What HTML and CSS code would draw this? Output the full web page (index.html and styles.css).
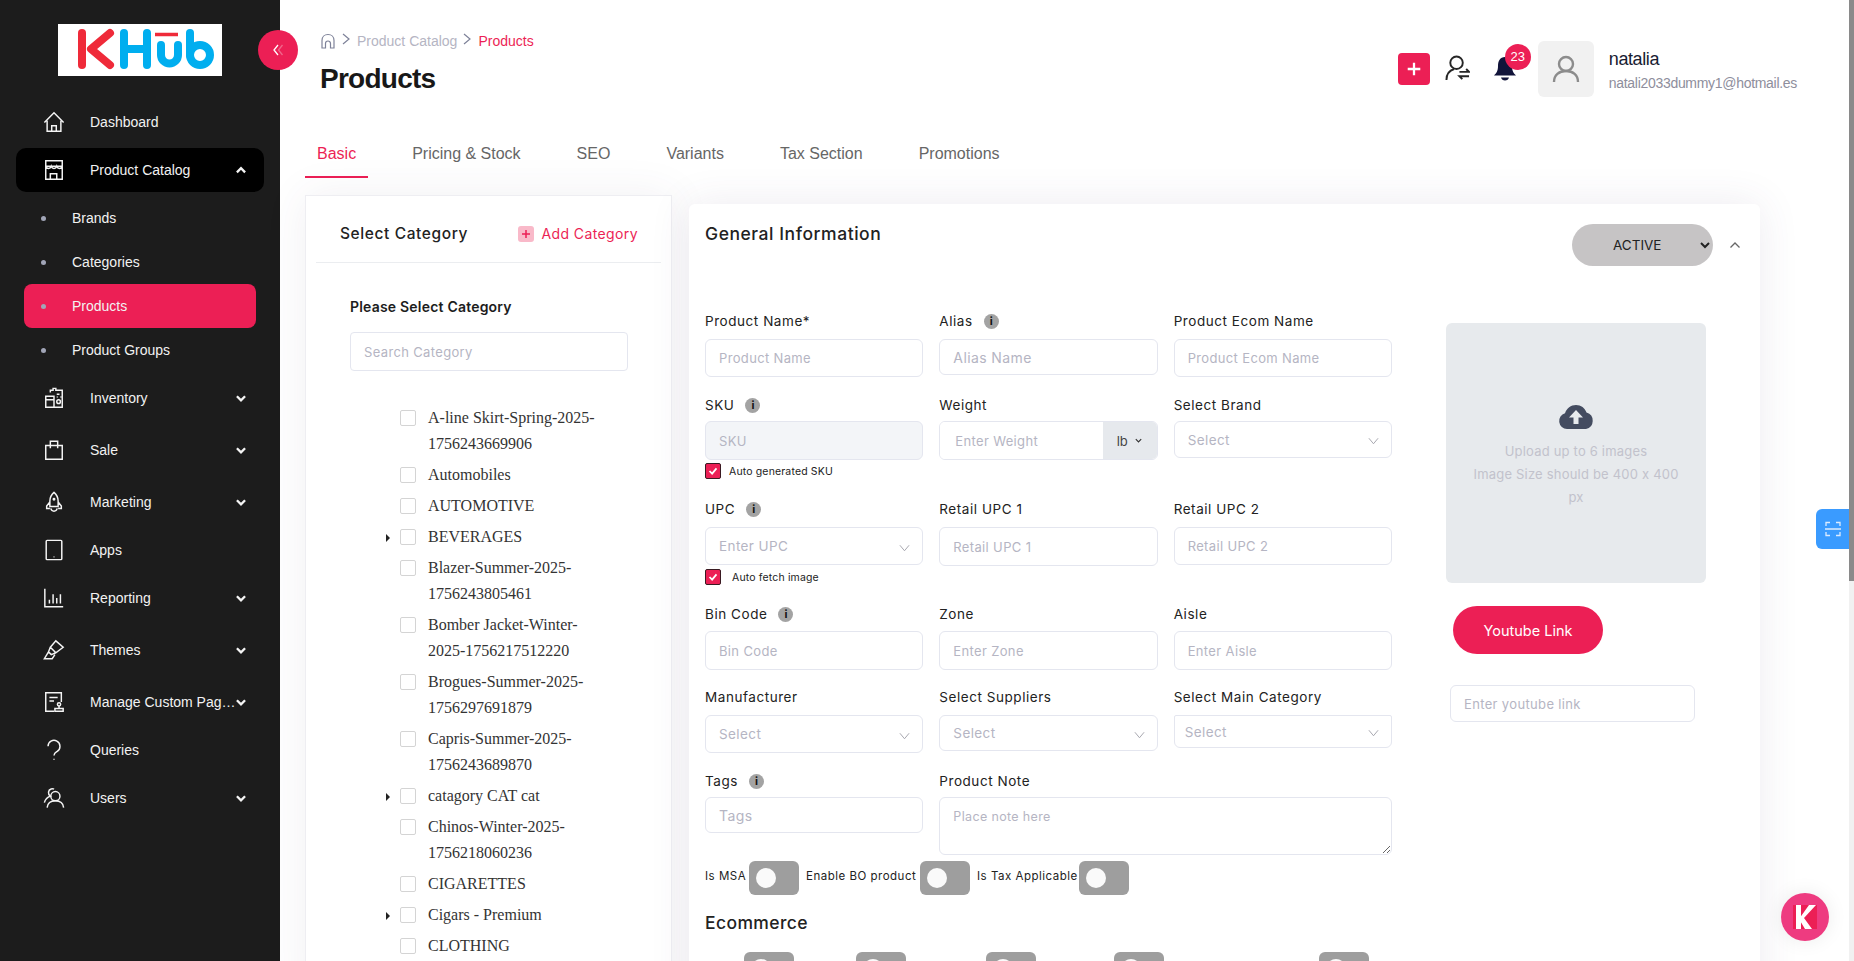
FILE: index.html
```html
<!DOCTYPE html>
<html lang="en">
<head>
<meta charset="utf-8">
<title>Products</title>
<link rel="stylesheet" href="styles.css">
</head>
<body>
<div class="app">
  <aside class="sidebar">
    <div class="logo">
      <svg viewBox="0 0 164 52" width="164" height="52" fill="none" stroke-linecap="round" stroke-linejoin="round">
        <path d="M24 9V41" stroke="#ef2a39" stroke-width="8"/>
        <path d="M52 9L33 25L52 41" stroke="#ef2a39" stroke-width="8"/>
        <path d="M66 9V41M89 9V41M66 25H89" stroke="#00aeef" stroke-width="8"/>
        <path d="M103 21V31a8.500 8.500 0 0 0 17 0V21" stroke="#00aeef" stroke-width="8"/>
        <path d="M97 10.500H120" stroke="#ef2a39" stroke-width="3.500" stroke-linecap="butt"/>
        <path d="M132 9V31" stroke="#00aeef" stroke-width="8"/>
        <circle cx="142" cy="31" r="10" stroke="#00aeef" stroke-width="8"/>
      </svg>
    </div>
    <nav class="nav">
      <a class="nav-item">
        <span class="nav-icon"><svg viewBox="0 0 24 24"><path d="M1.500 12.500L12 2l10.500 10.500M4.500 10.500V22h15V10.500M9.500 22v-6h5v6"/></svg></span>
        <span class="nav-text">Dashboard</span>
      </a>
      <a class="nav-item open">
        <span class="nav-icon"><svg viewBox="0 0 24 24"><path d="M3 2h18v6H3zM3 8v14h18V8M3 8c1 3 5 3 6 0 1 3 5 3 6 0 1 3 5 3 6 0M8 22v-6h7v6"/></svg></span>
        <span class="nav-text">Product Catalog</span>
        <svg class="chev" viewBox="0 0 12 12"><path d="M2.500 8L6 4.500 9.500 8"/></svg>
      </a>
      <a class="sub-item"><i class="dot"></i>Brands</a>
      <a class="sub-item"><i class="dot"></i>Categories</a>
      <a class="sub-item active"><i class="dot"></i>Products</a>
      <a class="sub-item"><i class="dot"></i>Product Groups</a>
      <a class="nav-item tall">
        <span class="nav-icon"><svg viewBox="0 0 24 24"><path d="M8 6V3.500h3V1.500h3v2h7V22H12M3 10h9v12H3zM3 14h9M15 8h3M15 11h1M19 11h1"/><circle cx="17" cy="16" r="2"/></svg></span>
        <span class="nav-text">Inventory</span>
        <svg class="chev" viewBox="0 0 12 12"><path d="M2.500 4.500L6 8l3.500-3.500"/></svg>
      </a>
      <a class="nav-item tall">
        <span class="nav-icon"><svg viewBox="0 0 24 24"><path d="M3 7h18v15H3zM8 10V2.500h8V10"/></svg></span>
        <span class="nav-text">Sale</span>
        <svg class="chev" viewBox="0 0 12 12"><path d="M2.500 4.500L6 8l3.500-3.500"/></svg>
      </a>
      <a class="nav-item tall">
        <span class="nav-icon"><svg viewBox="0 0 24 24"><path d="M12 1.500c3.500 3 4.500 6 4.500 9.500v6h-9v-6c0-3.500 1-6.500 4.500-9.500zM7.500 12L4 16.500v2.500h3.500M16.500 12l3.500 4.500v2.500h-3.500M8.500 19c.500 2 2 3 3.500 3s3-1 3.500-3"/><circle cx="12" cy="9" r=".8"/></svg></span>
        <span class="nav-text">Marketing</span>
        <svg class="chev" viewBox="0 0 12 12"><path d="M2.500 4.500L6 8l3.500-3.500"/></svg>
      </a>
      <a class="nav-item">
        <span class="nav-icon"><svg viewBox="0 0 24 24"><rect x="3.500" y="1.500" width="17" height="21" rx="1"/><path d="M11.500 19.500h1"/></svg></span>
        <span class="nav-text">Apps</span>
      </a>
      <a class="nav-item tall">
        <span class="nav-icon"><svg viewBox="0 0 24 24"><path d="M2 2v19.500h20M7 18v-4M11 18V8M15 18v-6M19 18V8"/></svg></span>
        <span class="nav-text">Reporting</span>
        <svg class="chev" viewBox="0 0 12 12"><path d="M2.500 4.500L6 8l3.500-3.500"/></svg>
      </a>
      <a class="nav-item tall">
        <span class="nav-icon"><svg viewBox="0 0 24 24"><path d="M14 2l8 7-8 6-6-6zM8 9l-2 5 3 3 5-2M6 14l-4.500 7.500H10l3-4.500"/></svg></span>
        <span class="nav-text">Themes</span>
        <svg class="chev" viewBox="0 0 12 12"><path d="M2.500 4.500L6 8l3.500-3.500"/></svg>
      </a>
      <a class="nav-item tall">
        <span class="nav-icon"><svg viewBox="0 0 24 24"><path d="M12 22H3V2h17v10M7 7h9M7 11h5M13 22v-3h9v3zM17.500 19v-3"/><circle cx="17.500" cy="14.500" r="1.800"/></svg></span>
        <span class="nav-text">Manage Custom Pag&hellip;</span>
        <svg class="chev" viewBox="0 0 12 12"><path d="M2.500 4.500L6 8l3.500-3.500"/></svg>
      </a>
      <a class="nav-item">
        <span class="nav-icon"><svg viewBox="0 0 24 24"><path d="M5.500 8a6.500 6.500 0 1 1 10 5.500c-2 1.300-3.500 2-3.500 4.500M12 21.500v1"/></svg></span>
        <span class="nav-text">Queries</span>
      </a>
      <a class="nav-item tall">
        <span class="nav-icon"><svg viewBox="0 0 24 24"><circle cx="13.500" cy="10" r="5"/><path d="M4.500 22.500c.5-5 4-7.500 9-7.500s8.500 2.500 9 7.500M12 2.500c-1-1-5.500-1-6 3-.2 2 .5 3.500 2 4.500-3 1-5.500 3.500-6.500 7"/></svg></span>
        <span class="nav-text">Users</span>
        <svg class="chev" viewBox="0 0 12 12"><path d="M2.500 4.500L6 8l3.500-3.500"/></svg>
      </a>
    </nav>
  </aside>

  <main class="main">
    <header class="topbar">
      <div class="page-head">
        <div class="crumbs">
          <svg class="crumb-home" viewBox="0 0 16 16"><path d="M2 15V7.500C2 4 4.500 1.500 8 1.500s6 2.500 6 6V15h-3.500v-4.500a2.500 2.500 0 0 0-5 0V15z"/></svg>
          <svg class="crumb-sep" viewBox="0 0 8 12"><path d="M1 1l6 5-6 5"/></svg>
          <span class="crumb-muted">Product Catalog</span>
          <svg class="crumb-sep" viewBox="0 0 8 12"><path d="M1 1l6 5-6 5"/></svg>
          <span class="crumb-current">Products</span>
        </div>
        <h1 class="title">Products</h1>
      </div>
      <div class="user-area">
        <button class="add-btn"><svg viewBox="0 0 14 14"><path d="M7 1.500v11M1.500 7h11"/></svg></button>
        <svg class="swap-icon" viewBox="0 0 26 28"><circle cx="12" cy="8" r="6.500"/><path d="M1.500 26c0-6 3-10 8-11.500M15 17.500h10l-3-3M25 22H15l3 3"/></svg>
        <span class="bell">
          <svg viewBox="0 0 24 28"><path d="M12 2c-5 0-7 4-7 9 0 5-1.500 7-4 9.500h22c-2.500-2.500-4-4.500-4-9.500 0-5-2-9-7-9z"/><path d="M8 22.500h8c-.5 2-2 3-4 3s-3.500-1-4-3z"/></svg>
          <span class="badge">23</span>
        </span>
        <span class="avatar"><svg viewBox="0 0 28 28"><circle cx="14" cy="9" r="7"/><path d="M2 27c0-7 5-11 12-11s12 4 12 11"/></svg></span>
        <div class="user-meta">
          <div class="user-name">natalia</div>
          <div class="user-mail">natali2033dummy1@hotmail.es</div>
        </div>
      </div>
    </header>

    <div class="tabs">
      <a class="tab active">Basic</a>
      <a class="tab">Pricing &amp; Stock</a>
      <a class="tab">SEO</a>
      <a class="tab">Variants</a>
      <a class="tab">Tax Section</a>
      <a class="tab">Promotions</a>
    </div>

    <div class="content">
      <section class="cat-card">
        <div class="cat-head">
          <h3 class="cat-title">Select Category</h3>
          <a class="cat-add"><span class="cat-add-icon"><svg viewBox="0 0 10 10"><path d="M5 1v8M1 5h8"/></svg></span>Add Category</a>
        </div>
        <div class="cat-body">
          <div class="cat-sub">Please Select Category</div>
          <input class="cat-search" placeholder="Search Category">
          <ul class="tree">
            <li><i class="box"></i><span>A-line Skirt-Spring-2025-1756243669906</span></li>
            <li><i class="box"></i><span>Automobiles</span></li>
            <li><i class="box"></i><span>AUTOMOTIVE</span></li>
            <li class="has-kids"><i class="box"></i><span>BEVERAGES</span></li>
            <li><i class="box"></i><span>Blazer-Summer-2025-1756243805461</span></li>
            <li><i class="box"></i><span>Bomber Jacket-Winter-2025-1756217512220</span></li>
            <li><i class="box"></i><span>Brogues-Summer-2025-1756297691879</span></li>
            <li><i class="box"></i><span>Capris-Summer-2025-1756243689870</span></li>
            <li class="has-kids"><i class="box"></i><span>catagory CAT cat</span></li>
            <li><i class="box"></i><span>Chinos-Winter-2025-1756218060236</span></li>
            <li><i class="box"></i><span>CIGARETTES</span></li>
            <li class="has-kids"><i class="box"></i><span>Cigars - Premium</span></li>
            <li><i class="box"></i><span>CLOTHING</span></li>
          </ul>
        </div>
      </section>

      <section class="info-card">
        <div class="info-head">
          <h2 class="info-title">General Information</h2>
          <div class="info-actions">
            <select class="status"><option>ACTIVE</option></select>
            <svg class="collapse" viewBox="0 0 12 8"><path d="M1.500 6.500L6 2l4.500 4.500"/></svg>
          </div>
        </div>
        <div class="info-body">
          <div class="form">
            <div class="row h82">
              <div class="field"><label>Product Name*</label><input class="ctl h38" placeholder="Product Name"></div>
              <div class="field"><label>Alias <i class="info">i</i></label><input class="ctl h36 big" placeholder="Alias Name"></div>
              <div class="field"><label>Product Ecom Name</label><input class="ctl h38" placeholder="Product Ecom Name"></div>
            </div>
            <div class="row h106 nudge2">
              <div class="field"><label>SKU <i class="info">i</i></label><input class="ctl h39 disabled" placeholder="SKU" disabled>
                <div class="check-line"><i class="tick"><svg viewBox="0 0 16 16"><path d="M4 8l3 3 5-6"/></svg></i><span>Auto generated SKU</span></div>
              </div>
              <div class="field"><label>Weight</label>
                <div class="weight"><input placeholder="Enter Weight"><span class="unit">lb <svg viewBox="0 0 10 10"><path d="M2 3.500L5 6.500 8 3.500"/></svg></span></div>
              </div>
              <div class="field"><label>Select Brand</label><div class="ctl sel h37">Select<svg viewBox="0 0 12 8"><path d="M1 1l5 6 5-6"/></svg></div></div>
            </div>
            <div class="row h104">
              <div class="field"><label>UPC <i class="info">i</i></label><div class="ctl sel h38">Enter UPC<svg viewBox="0 0 12 8"><path d="M1 1l5 6 5-6"/></svg></div>
                <div class="check-line wide"><i class="tick"><svg viewBox="0 0 16 16"><path d="M4 8l3 3 5-6"/></svg></i><span>Auto fetch image</span></div>
              </div>
              <div class="field"><label>Retail UPC 1</label><input class="ctl h39" placeholder="Retail UPC 1"></div>
              <div class="field"><label>Retail UPC 2</label><input class="ctl h38" placeholder="Retail UPC 2"></div>
            </div>
            <div class="row h84 nudge1">
              <div class="field"><label>Bin Code <i class="info">i</i></label><input class="ctl h39" placeholder="Bin Code"></div>
              <div class="field"><label>Zone</label><input class="ctl h39" placeholder="Enter Zone"></div>
              <div class="field"><label>Aisle</label><input class="ctl h39" placeholder="Enter Aisle"></div>
            </div>
            <div class="row h82">
              <div class="field"><label>Manufacturer</label><div class="ctl sel h38">Select<svg viewBox="0 0 12 8"><path d="M1 1l5 6 5-6"/></svg></div></div>
              <div class="field"><label>Select Suppliers</label><div class="ctl sel h36">Select<svg viewBox="0 0 12 8"><path d="M1 1l5 6 5-6"/></svg></div></div>
              <div class="field"><label>Select Main Category</label><div class="ctl sel h33 tight">Select<svg viewBox="0 0 12 8"><path d="M1 1l5 6 5-6"/></svg></div></div>
            </div>
            <div class="row h92 nudge2">
              <div class="field"><label>Tags <i class="info">i</i></label><input class="ctl h36 big" placeholder="Tags"></div>
              <div class="field span2"><label>Product Note</label><textarea class="note" placeholder="Place note here"></textarea></div>
            </div>
            <div class="switches">
              <span class="sw-label l1">Is MSA</span><span class="toggle"></span>
              <span class="sw-label l2">Enable BO product</span><span class="toggle"></span>
              <span class="sw-label l3">Is Tax Applicable</span><span class="toggle"></span>
            </div>
            <h3 class="eco-title">Ecommerce</h3>
            <div class="eco-row">
              <span class="toggle"></span><span class="toggle"></span><span class="toggle"></span><span class="toggle"></span><span class="toggle"></span>
            </div>
          </div>
          <aside class="media">
            <div class="upload">
              <svg class="cloud" viewBox="0 0 36 24"><path d="M9 24a8 8 0 0 1-2-15.700C8.500 3.500 13 0 18 0c5 0 9 3 10.500 7.500A8.500 8.500 0 0 1 28 24z"/><path class="arrow" d="M18 5l-7 7.500h4.500V19h5v-6.500H25z"/></svg>
              <p>Upload up to 6 images<br>Image Size should be 400 x 400 px</p>
            </div>
            <button class="yt-btn">Youtube Link</button>
            <input class="ctl yt-input" placeholder="Enter youtube link">
          </aside>
        </div>
      </section>
    </div>
  </main>
</div>

<button class="collapse-side"><svg viewBox="0 0 12 12"><path d="M6 1L2 6l4 5"/><path class="faded" d="M10.500 1L6.500 6l4 5"/></svg></button>
<div class="scan-tab"><svg viewBox="0 0 16 16"><path d="M1 5V1.500h4M11 1.500h4V5M1 11v3.500h4M11 14.500h4V11M0 8h16"/></svg></div>
<div class="fab"><svg viewBox="0 0 24 24"><rect width="24" height="24" fill="#ec1f55"/><path d="M3 0h5v24H3zM16 0h7L11 13l8 11h-7L6 14z" fill="#fff"/></svg></div>
<div class="scrollbar"><div class="thumb"></div></div>
</body>
</html>
```

FILE: styles.css
```css
* { box-sizing: border-box; }
html, body { margin: 0; height: 100%; overflow: hidden; background: #fff; }
body { font-family: "Liberation Sans", Arial, sans-serif; color: #181c32; }
.app { display: flex; height: 961px; overflow: hidden; }

/* sidebar */
.sidebar { width: 280px; flex: none; background: #1c1c1c; color: #fff; }
.logo { display: flex; width: 164px; height: 52px; margin: 24px 0 0 58px; background: #fff; }
.nav { margin-top: 24px; padding: 0 16px; }
.nav-item { display: flex; align-items: center; height: 44px; padding: 0 16px 0 26px; border-radius: 10px; font-size: 14px; color: #f2f2f2; }
.nav-item.tall { height: 52px; }
.nav-item.open { background: #000; margin: 4px 0; }
.nav-icon { width: 24px; height: 24px; flex: none; margin-right: 24px; }
.nav-icon svg { display: block; width: 22px; height: 22px; margin: 1px; fill: none; stroke: #f4f4f4; stroke-width: 1.600; }
.nav-text { flex: 1; white-space: nowrap; }
.chev { width: 14px; height: 14px; flex: none; fill: none; stroke: #f4f4f4; stroke-width: 2; margin-left: -3px; }
.sub-item { display: flex; align-items: center; height: 44px; margin: 0 8px; padding-left: 17px; border-radius: 8px; font-size: 14px; color: #f2f2f2; }
.sub-item.active { background: #ec1f55; }
.dot { width: 5px; height: 5px; border-radius: 50%; background: #a1a5b7; margin-right: 26px; }
.collapse-side { position: absolute; left: 258px; top: 30px; width: 40px; height: 40px; padding: 14px; border: 0; border-radius: 50%; background: #ec1f55; }
.collapse-side svg { display: block; width: 12px; height: 12px; fill: none; stroke: #fff; stroke-width: 1.300; }
.collapse-side .faded { stroke: #f0668b; }

/* main */
.main { flex: 1; min-width: 0; padding: 0 94px 0 25px; }
.topbar { display: flex; justify-content: space-between; height: 130px; }
.page-head { padding: 32px 0 0 15px; }
.crumbs { display: flex; align-items: center; height: 18px; font-size: 14px; }
.crumb-home { width: 16px; height: 16px; fill: none; stroke: #7e8299; stroke-width: 1.200; margin-right: 6px; }
.crumb-sep { width: 8px; height: 12px; fill: none; stroke: #7e8299; stroke-width: 1.200; margin: -4px 7px 0 0; }
.crumb-muted { color: #b5b5c3; margin-right: 6px; }
.crumb-current { color: #ec1f55; }
.title { margin: 11px 0 0; font-size: 28px; line-height: 36px; font-weight: 700; letter-spacing: -.75px; color: #181818; }
.user-area { display: flex; align-items: flex-start; padding-top: 41px; margin-right: -37px; }
.add-btn { width: 32px; height: 32px; margin: 12px 15px 0 0; padding: 8px; border: 0; border-radius: 4px; background: #ec1f55; }
.add-btn svg { display: block; width: 16px; height: 16px; fill: none; stroke: #fff; stroke-width: 2; }
.swap-icon { width: 25px; height: 27px; margin: 14px 23px 0 0; fill: none; stroke: #262626; stroke-width: 2; }
.bell { position: relative; width: 24px; height: 28px; margin: 14px 21px 0 0; }
.bell svg { display: block; width: 24px; height: 28px; fill: #11143a; }
.badge { position: absolute; left: 12px; top: -11px; width: 26px; height: 26px; border-radius: 50%; background: #ec1f55; color: #fff; font-size: 13px; line-height: 26px; text-align: center; }
.avatar { display: flex; align-items: center; justify-content: center; width: 56px; height: 56px; border-radius: 6px; background: #f1f1f1; }
.avatar svg { width: 28px; height: 28px; fill: none; stroke: #8c8c8c; stroke-width: 2.400; }
.user-meta { margin-left: 15px; }
.user-name { font-size: 18px; line-height: 24px; margin-top: 6px; letter-spacing: -.4px; color: #181c32; }
.user-mail { font-size: 14px; line-height: 20px; margin-top: 2px; letter-spacing: -.3px; color: #8e8e9c; }

.tabs { display: flex; gap: 32px; height: 48px; }
.tab { height: 48px; padding: 0 12px; font-size: 16px; line-height: 48px; color: #666; }
.tab.active { color: #ec1f55; border-bottom: 2px solid #ec1f55; }

.content { display: flex; align-items: flex-start; gap: 17px; }
.cat-card { width: 367px; flex: none; height: 800px; margin-top: 17px; padding: 0 10px; background: #fff; border: 1px solid #eeeef2; box-shadow: 0 0 40px rgba(82, 63, 105, .08); }
.cat-head { display: flex; align-items: center; justify-content: space-between; height: 67px; padding: 9px 23px 0 24px; border-bottom: 1px solid #ebedf0; font-family: "Inter", sans-serif; }
.cat-title { margin: 0; font-size: 15.500px; font-weight: 500; color: #222; letter-spacing: .6px; }
.cat-add { display: flex; align-items: center; font-size: 14px; color: #ec1f55; letter-spacing: .4px; }
.cat-add-icon { display: flex; width: 16px; height: 16px; padding: 3px; margin-right: 7px; border-radius: 3px; background: #f9b9c9; }
.cat-add-icon svg { display: block; fill: none; stroke: #ec1f55; stroke-width: 1.500; }
.cat-body { padding-left: 34px; }
.cat-sub { margin-top: 34px; font-family: "Inter", sans-serif; font-size: 14px; line-height: 20px; font-weight: 600; color: #1d1d1d; letter-spacing: .2px; }
.cat-search { display: block; width: 278px; height: 39px; margin-top: 15px; padding: 0 13px; border: 1px solid #e4e6ef; border-radius: 4px; font-family: "Inter", sans-serif; font-size: 13px; letter-spacing: .35px; outline: 0; }
.cat-search::placeholder { color: #b5b5c3; }
.tree { list-style: none; margin: 34px 0 0; padding: 0 0 0 50px; font-family: "Liberation Serif", "Times New Roman", serif; font-size: 16px; line-height: 26px; color: #333; }
.tree li { position: relative; display: flex; padding-bottom: 5px; }
.tree span { width: 172px; margin-left: 12px; }
.box { flex: none; width: 16px; height: 16px; margin-top: 5px; border: 1px solid #d4d4d4; border-radius: 2px; background: #fff; }
.has-kids::before { content: ""; position: absolute; left: -14px; top: 10px; border-left: 4px solid #222; border-top: 4px solid transparent; border-bottom: 4px solid transparent; }

.info-card { flex: 1; min-width: 0; height: 800px; margin-top: 26px; padding: 0 16px; background: #fff; border-radius: 6px; box-shadow: 0 0 40px rgba(82, 63, 105, .1); }
.info-head { display: flex; justify-content: space-between; height: 107px; font-family: "Inter", sans-serif; }
.info-title { margin: 17px 0 0; font-size: 17.500px; line-height: 26px; font-weight: 500; color: #222; letter-spacing: .55px; }
.info-actions { display: flex; align-items: flex-start; margin-right: -7px; padding-top: 20px; }
.status { width: 141px; height: 42px; padding: 0 0 0 37px; border: 0; border-radius: 21px; background: #c6c4c5; font-family: "Inter", sans-serif; font-size: 13.500px; color: #222; outline: 0; }
.collapse { width: 12px; height: 8px; margin: 17px 10px 0 16px; fill: none; stroke: #666; stroke-width: 1.300; }
.info-body { display: flex; font-family: "Inter", sans-serif; }
.form { width: 687px; flex: none; }
.row { display: grid; grid-template-columns: repeat(3, minmax(0, 1fr)); column-gap: 16px; align-items: start; }
.h82 { height: 82px; } .h84 { height: 84px; } .h92 { height: 92px; } .h104 { height: 104px; } .h106 { height: 106px; }
.span2 { grid-column: span 2; }
.field { min-width: 0; }
.field label { display: flex; align-items: center; height: 20px; margin-bottom: 8px; font-size: 13.500px; color: #222; letter-spacing: .55px; }
.nudge1 .field label { margin-top: 1px; margin-bottom: 7px; }
.nudge2 .field label { margin-top: 2px; margin-bottom: 6px; }
.info { width: 15px; height: 15px; margin-left: 11px; border-radius: 50%; background: #a3a3a3; color: #111; font-size: 11px; font-weight: 700; font-style: normal; line-height: 15px; text-align: center; letter-spacing: 0; }
.ctl { display: block; width: 100%; padding: 0 13px; border: 1px solid #e4e6ef; border-radius: 6px; font-family: "Inter", sans-serif; font-size: 13px; letter-spacing: .35px; outline: 0; background: #fff; }
.ctl::placeholder, .weight input::placeholder, .note::placeholder { color: #b5b5c3; }
.h33 { height: 33px; } .h36 { height: 36px; } .h37 { height: 37px; } .h38 { height: 38px; } .h39 { height: 39px; }
.disabled { background: #f3f5f8; }
.big { font-size: 14px; letter-spacing: .4px; }
.sel { display: flex; align-items: center; justify-content: space-between; color: #b5b5c3; font-size: 13.500px; letter-spacing: .4px; padding-right: 12px; }
.sel svg { width: 11px; height: 8px; margin-top: 3px; fill: none; stroke: #a0a0a8; stroke-width: 1; }
.tight { padding-left: 10px; border-top-right-radius: 2px; border-top-left-radius: 2px; }
.weight { display: flex; height: 39px; border: 1px solid #e4e6ef; border-radius: 6px; overflow: hidden; }
.weight input { flex: 1; min-width: 0; padding: 0 15px; border: 0; font-family: "Inter", sans-serif; font-size: 13px; letter-spacing: .35px; outline: 0; }
.unit { display: flex; flex: none; align-items: center; gap: 6px; width: 54px; padding-left: 14px; background: #e6e9ed; font-size: 13px; color: #444; }
.unit svg { width: 9px; height: 9px; fill: none; stroke: #333; stroke-width: 1.300; }
.check-line { display: flex; align-items: center; height: 16px; margin-top: 3px; font-size: 10.500px; color: #222; letter-spacing: .15px; }
.check-line span { margin-left: 8px; }
.check-line.wide { margin-top: 4px; }
.check-line.wide span { margin-left: 11px; }
.tick { display: block; width: 16px; height: 16px; border: 1px solid #3a1a22; border-radius: 2px; background: #ec1f55; }
.tick svg { display: block; width: 14px; height: 14px; fill: none; stroke: #fff; stroke-width: 2; }
.note { display: block; width: 100%; height: 58px; padding: 11px 13px; border: 1px solid #e4e6ef; border-radius: 6px; font-family: "Inter", sans-serif; font-size: 12.500px; letter-spacing: .35px; outline: 0; resize: vertical; }
.switches { display: flex; align-items: center; height: 34px; }
.sw-label { font-size: 11.500px; letter-spacing: .5px; color: #222; white-space: nowrap; margin-top: -4px; }
.l1 { width: 44px; }
.l2 { width: 114px; margin-left: 7px; }
.l3 { width: 102px; margin-left: 7px; }
.toggle { display: block; position: relative; flex: none; width: 50px; height: 34px; border-radius: 6px; background: #9e9e9e; }
.toggle::before { content: ""; position: absolute; left: 7px; top: 7px; width: 20px; height: 20px; border-radius: 50%; background: #fafafa; }
.eco-title { height: 27px; margin: 14px 0 0; font-size: 17.500px; line-height: 27px; font-weight: 500; color: #222; letter-spacing: .4px; }
.eco-row { display: flex; margin-top: 16px; padding-left: 39px; }
.eco-row .toggle:nth-child(1) { margin-right: 62px; }
.eco-row .toggle:nth-child(2) { margin-right: 80px; }
.eco-row .toggle:nth-child(3) { margin-right: 78px; }
.eco-row .toggle:nth-child(4) { margin-right: 155px; }
.media { margin-left: 54px; width: 260px; flex: none; padding-top: 12px; }
.upload { display: flex; flex-direction: column; align-items: center; justify-content: center; width: 260px; height: 260px; padding: 8px 26px 0; border-radius: 6px; background: #e7eaed; }
.cloud { width: 36px; height: 24px; fill: #444c60; }
.cloud .arrow { fill: #e7eaed; }
.upload p { margin: 11px 0 0; font-size: 13px; line-height: 23px; color: #c2c2cc; text-align: center; letter-spacing: .2px; }
.yt-btn { display: block; width: 150px; height: 48px; margin: 23px 0 0 7px; border: 0; border-radius: 24px; background: #ec1f55; color: #fff; font-family: "Inter", sans-serif; font-size: 14.500px; }
.yt-input { width: 245px; height: 37px; margin: 31px 0 0 4px; }

/* overlays */
.scan-tab { position: absolute; left: 1816px; top: 509px; width: 33px; height: 40px; padding: 12px 9px; border-radius: 6px 0 0 6px; background: #3a9bff; }
.scan-tab svg { display: block; width: 16px; height: 16px; fill: none; stroke: #dcebff; stroke-width: 1.300; }
.fab { position: absolute; left: 1781px; top: 893px; width: 48px; height: 48px; padding: 12px; border-radius: 50%; background: #ee3b80; box-shadow: 0 0 20px rgba(0, 0, 0, .08); }
.fab svg { display: block; width: 24px; height: 24px; }
.scrollbar { position: absolute; right: 0; top: 0; width: 5px; height: 961px; background: #f1f1f1; }
.thumb { height: 581px; background: #8a8a8a; }
```
